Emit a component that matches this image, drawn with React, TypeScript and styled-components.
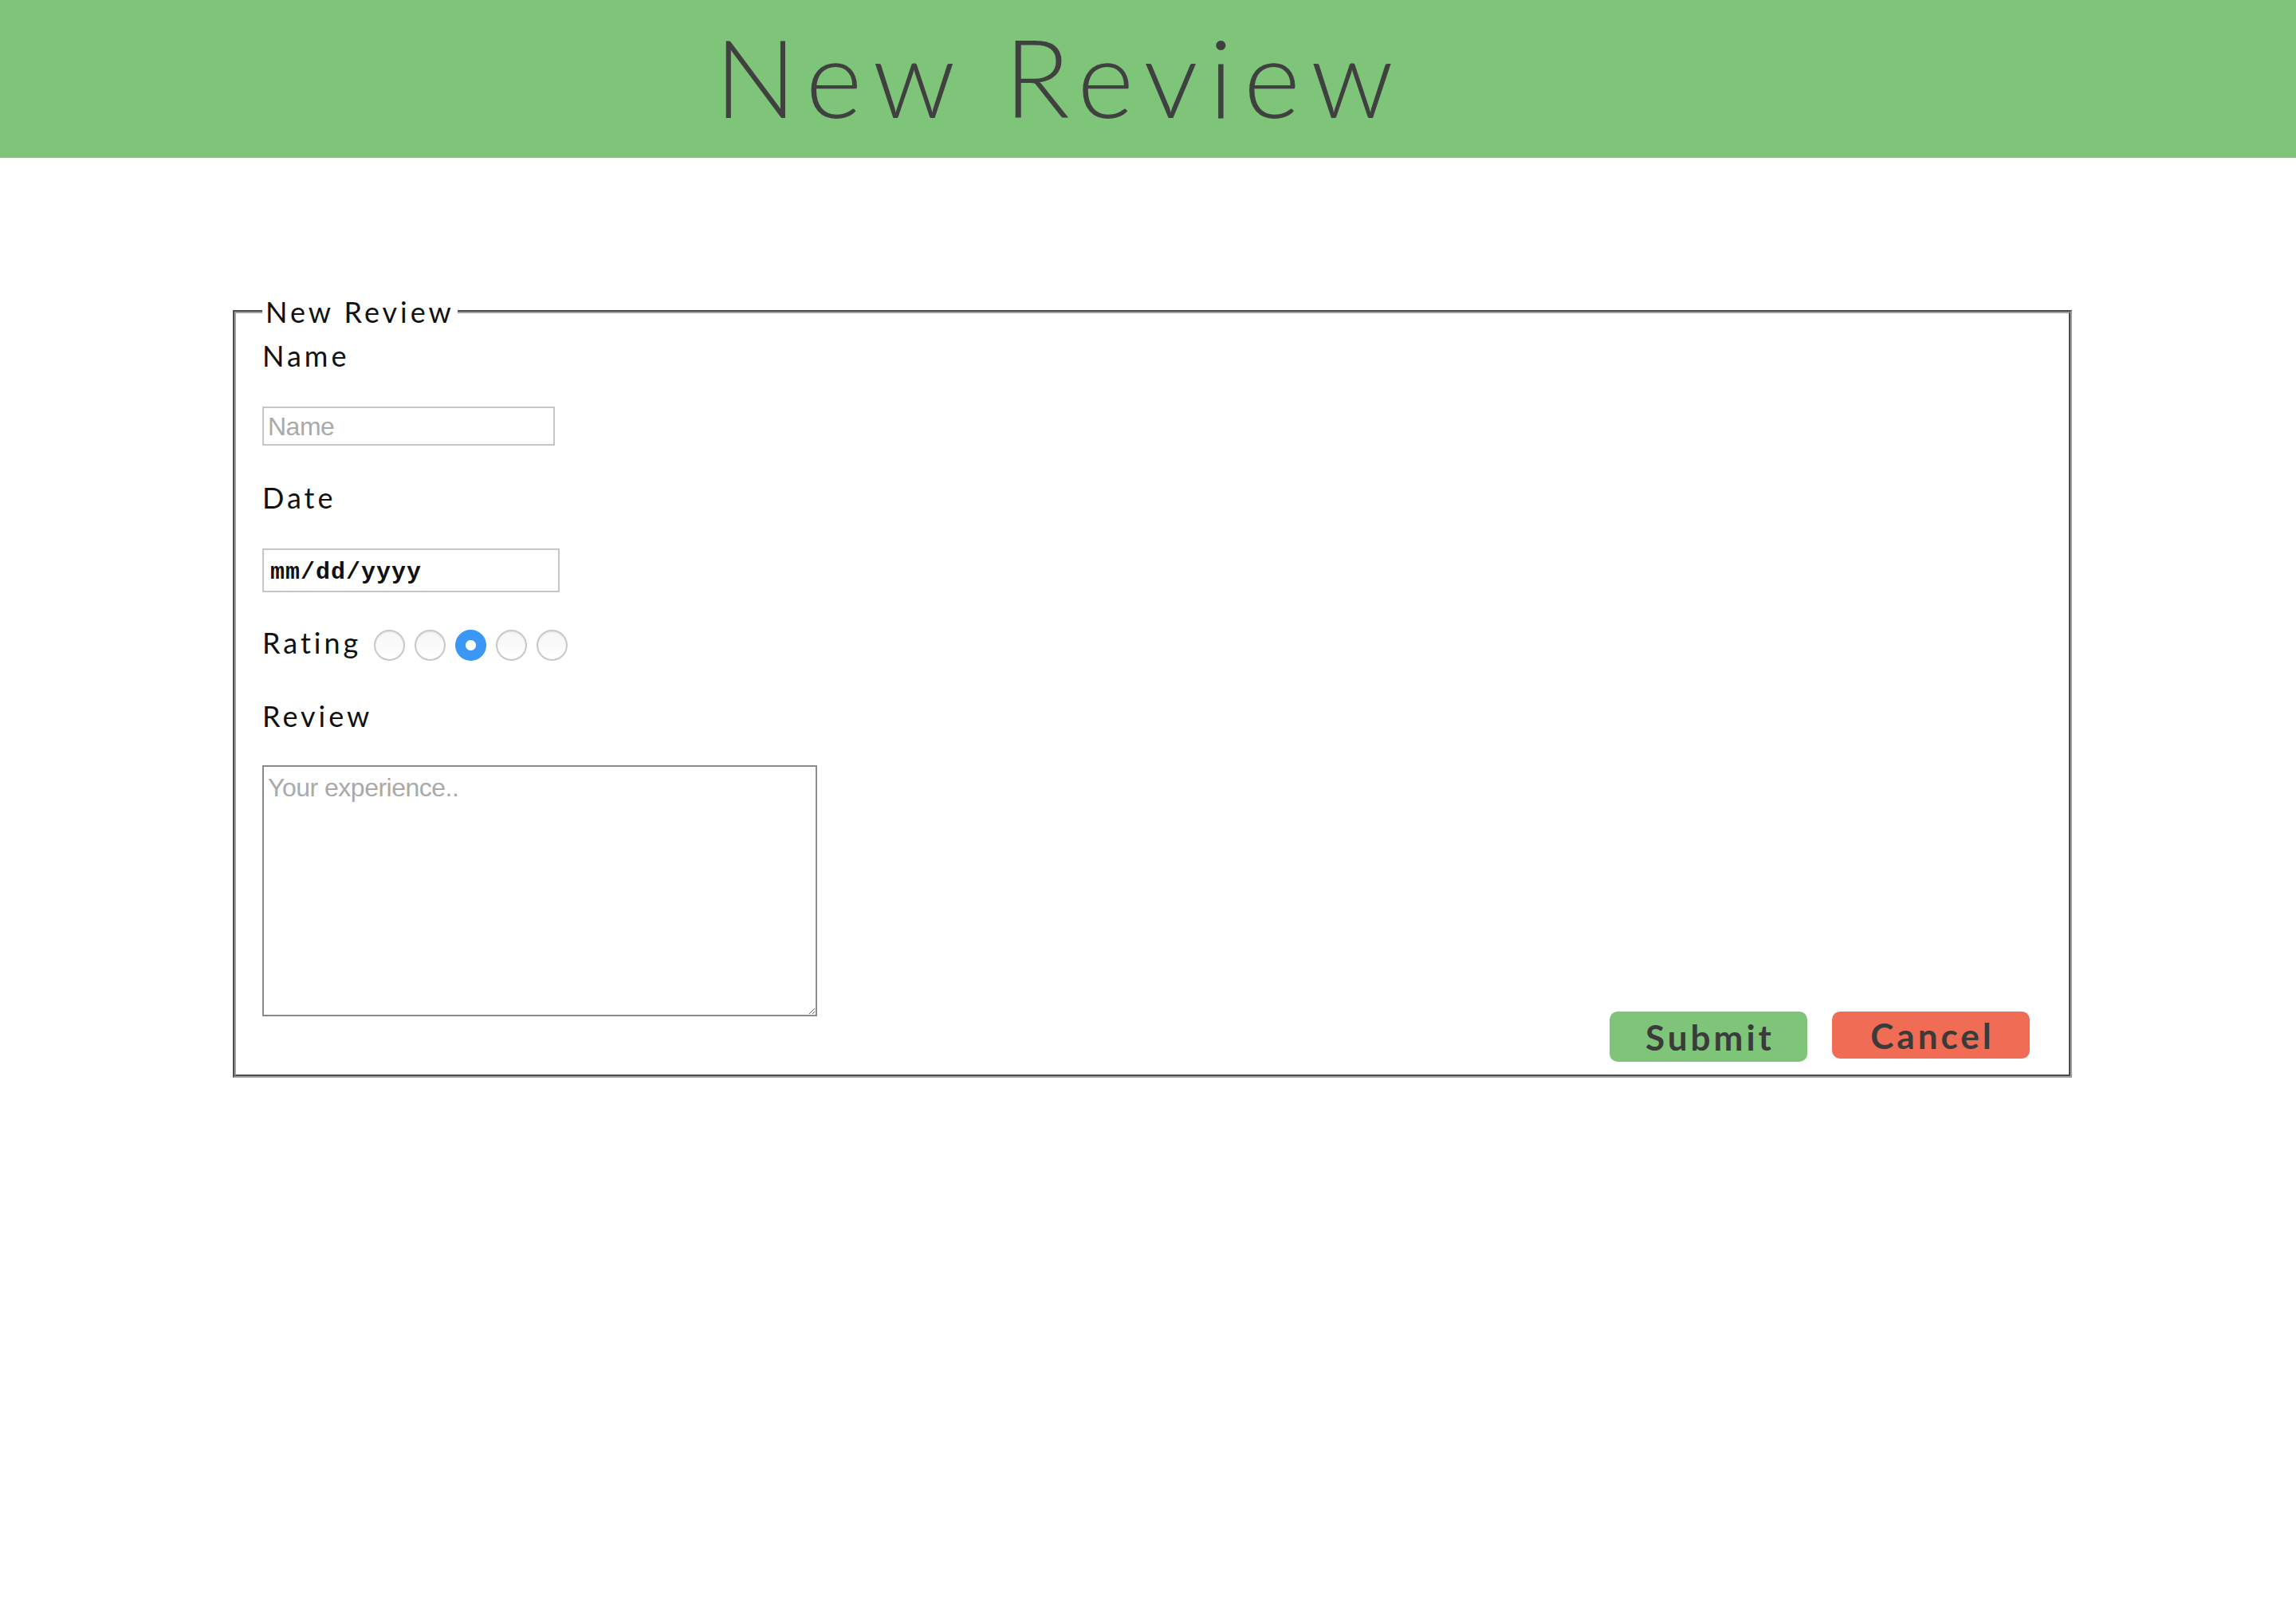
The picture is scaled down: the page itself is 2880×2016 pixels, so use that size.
import React from "react";
import styled, { createGlobalStyle } from "styled-components";

const GlobalStyle = createGlobalStyle`
  html, body {
    margin: 0;
    padding: 0;
    background: #ffffff;
  }
  body {
    font-family: Lato, "Open Sans", sans-serif;
  }
`;

const Header = styled.header`
  height: 198px;
  box-sizing: border-box;
  background: #7ec579;
  padding: 14px 222px 0 0;
  text-align: center;
`;

const Title = styled.h1`
  margin: 0;
  font-family: Lato, sans-serif;
  font-weight: 300;
  font-size: 136px;
  line-height: 163px;
  letter-spacing: 13.5px;
  color: #404040;
`;

const Main = styled.main`
  padding: 171px 281px 0 292px;
`;

const Fieldset = styled.fieldset`
  margin: 0;
  min-width: 0;
  border: 4px groove #a0a0a0;
  padding: 11px 49px 16px 33px;
  display: flex;
  flex-direction: column;
  align-items: flex-start;
`;

const Legend = styled.legend`
  padding: 0 4px;
  font-family: Lato, sans-serif;
  font-size: 36px;
  line-height: 44px;
  letter-spacing: 4px;
  color: #111111;
`;

const Label = styled.label<{ $gap: number }>`
  display: block;
  margin-top: ${(p) => p.$gap}px;
  font-family: Lato, sans-serif;
  font-size: 36px;
  line-height: 44px;
  letter-spacing: 4px;
  color: #111111;
`;

const TextInput = styled.input<{ $w: number; $h: number }>`
  box-sizing: border-box;
  margin: 42px 0 0 0;
  width: ${(p) => p.$w}px;
  height: ${(p) => p.$h}px;
  border: 2px solid #c6c6c6;
  padding: 2px 5px 0;
  font-family: "Liberation Sans", Arial, sans-serif;
  font-size: 32px;
  letter-spacing: -0.5px;
  color: #222;
  outline: none;
  &::placeholder {
    color: #a9a9a9;
  }
`;

const DateInput = styled(TextInput)`
  font-family: "Liberation Mono", "Courier New", monospace;
  font-weight: bold;
  font-size: 30px;
  letter-spacing: 1px;
  padding: 4px 8px 0;
  &::placeholder {
    color: #111111;
  }
`;

const RatingRow = styled.div`
  margin-top: 41px;
  display: flex;
  align-items: flex-start;
`;

const RatingLabel = styled.span`
  font-family: Lato, sans-serif;
  font-size: 36px;
  line-height: 44px;
  letter-spacing: 4px;
  color: #111111;
  margin-right: 16px;
`;

const Radios = styled.div`
  display: flex;
  gap: 12px;
  margin-top: 6px;
`;

const Radio = styled.input`
  appearance: none;
  -webkit-appearance: none;
  margin: 0;
  width: 39px;
  height: 39px;
  border-radius: 50%;
  box-sizing: border-box;
  border: 2px solid #c8c8c8;
  background: linear-gradient(#f6f6f6, #ffffff);
  box-shadow: inset 0 1px 2px rgba(0, 0, 0, 0.08);
  &:checked {
    border-color: #3b97f5;
    background: radial-gradient(circle, #ffffff 0 6px, #3b97f5 7px);
    box-shadow: none;
  }
`;

const BottomRow = styled.div`
  align-self: stretch;
  display: flex;
  align-items: flex-end;
  justify-content: space-between;
  margin-top: 40px;
`;

const TextArea = styled.textarea`
  box-sizing: border-box;
  width: 696px;
  height: 315px;
  margin: 0 0 57px 0;
  border: 2px solid #8a8a8a;
  padding: 8px 5px;
  font-family: "Liberation Sans", Arial, sans-serif;
  font-size: 32px;
  letter-spacing: -0.5px;
  line-height: 36px;
  color: #222;
  outline: none;
  &::placeholder {
    color: #a9a9a9;
  }
`;

const Actions = styled.div`
  display: flex;
  align-items: flex-start;
  gap: 31px;
`;

const Button = styled.button<{ $tone: "go" | "stop" }>`
  box-sizing: border-box;
  width: 248px;
  height: ${(p) => (p.$tone === "go" ? 63 : 59)}px;
  border: none;
  border-radius: 10px;
  background: ${(p) => (p.$tone === "go" ? "#7ec579" : "#f06c54")};
  color: #3b3b3b;
  font-family: Lato, sans-serif;
  font-weight: 700;
  font-size: 44px;
  letter-spacing: 4px;
  padding: 0 0 0 4px;
  line-height: 1;
  cursor: pointer;
`;

export default function App() {
  return (
    <>
      <GlobalStyle />
      <Header>
        <Title>New Review</Title>
      </Header>
      <Main>
        <form onSubmit={(e) => e.preventDefault()}>
          <Fieldset>
            <Legend>New Review</Legend>
            <Label $gap={0} htmlFor="name">Name</Label>
            <TextInput id="name" type="text" placeholder="Name" $w={367} $h={49} />
            <Label $gap={43} htmlFor="date">Date</Label>
            <DateInput id="date" type="text" placeholder="mm/dd/yyyy" $w={373} $h={55} />
            <RatingRow>
              <RatingLabel>Rating</RatingLabel>
              <Radios>
                {[1, 2, 3, 4, 5].map((n) => (
                  <Radio key={n} type="radio" name="rating" value={n} defaultChecked={n === 3} />
                ))}
              </Radios>
            </RatingRow>
            <Label $gap={47} htmlFor="review">Review</Label>
            <BottomRow>
              <TextArea id="review" placeholder="Your experience.." />
              <Actions>
                <Button type="submit" $tone="go">Submit</Button>
                <Button type="button" $tone="stop">Cancel</Button>
              </Actions>
            </BottomRow>
          </Fieldset>
        </form>
      </Main>
    </>
  );
}
